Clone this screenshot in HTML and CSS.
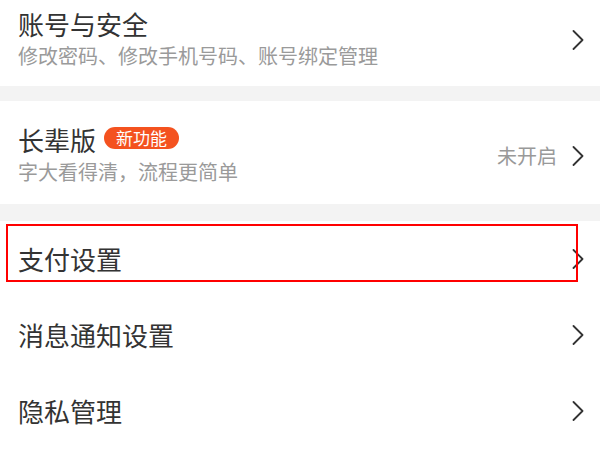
FILE: index.html
```html
<!DOCTYPE html>
<html lang="zh-CN">
<head>
<meta charset="utf-8">
<link rel="stylesheet" href="styles.css">
</head>
<body>
<div class="page">
  <section class="card card-first">
    <div class="card-text">
      <div class="title">账号与安全</div>
      <div class="sub">修改密码、修改手机号码、账号绑定管理</div>
    </div>
    <svg class="chev" viewBox="0 0 12 20" width="12" height="20"><path d="M1.5 1 L10.5 10 L1.5 19"/></svg>
  </section>
  <div class="sep"></div>
  <section class="card">
    <div class="card-text">
      <div class="title-row">
        <span class="title">长辈版</span>
        <span class="badge">新功能</span>
      </div>
      <div class="sub">字大看得清，流程更简单</div>
    </div>
    <span class="status">未开启</span>
    <svg class="chev" viewBox="0 0 12 20" width="12" height="20"><path d="M1.5 1 L10.5 10 L1.5 19"/></svg>
  </section>
  <div class="sep sep2"></div>
  <div class="list">
    <div class="row">
      <span class="row-title">支付设置</span>
      <svg class="chev" viewBox="0 0 12 20" width="12" height="20"><path d="M1.5 1 L10.5 10 L1.5 19"/></svg>
      <div class="highlight"></div>
    </div>
    <div class="row">
      <span class="row-title">消息通知设置</span>
      <svg class="chev" viewBox="0 0 12 20" width="12" height="20"><path d="M1.5 1 L10.5 10 L1.5 19"/></svg>
    </div>
    <div class="row">
      <span class="row-title">隐私管理</span>
      <svg class="chev" viewBox="0 0 12 20" width="12" height="20"><path d="M1.5 1 L10.5 10 L1.5 19"/></svg>
    </div>
  </div>
</div>
</body>
</html>
```

FILE: styles.css
```css
html, body {
  margin: 0;
  padding: 0;
  background: #ffffff;
}
body {
  width: 600px;
  height: 450px;
  overflow: hidden;
  font-family: "Noto Sans CJK SC", "Noto Sans", sans-serif;
  color: #333333;
}
.page {
  display: flex;
  flex-direction: column;
}
.card {
  display: flex;
  align-items: center;
  padding: 24px 16px 18px 18px;
  background: #ffffff;
}
.card-first {
  margin-top: -15px;
  padding-bottom: 16px;
}
.card-text {
  flex: 1;
  display: flex;
  flex-direction: column;
}
.title {
  font-size: 26px;
  line-height: 30px;
  color: #333333;
}
.title-row {
  display: flex;
  align-items: center;
}
.badge {
  margin-left: 8px;
  margin-bottom: 4px;
  height: 22px;
  line-height: 22px;
  padding: 0 12px;
  border-radius: 11px;
  background: #f4521f;
  color: #ffffff;
  font-size: 17px;
}
.sub {
  margin-top: 3px;
  font-size: 20px;
  line-height: 28px;
  color: #9a9a9a;
}
.status {
  font-size: 20px;
  line-height: 28px;
  color: #999999;
  margin-right: 15px;
}
.chev {
  display: block;
  flex: none;
}
.chev path {
  fill: none;
  stroke: #333333;
  stroke-width: 1.8;
  stroke-linecap: round;
  stroke-linejoin: round;
}
.sep {
  height: 15px;
  background: #f3f3f3;
}
.sep2 {
  height: 17px;
}
.list {
  display: flex;
  flex-direction: column;
}
.row {
  position: relative;
  height: 76px;
  display: flex;
  align-items: center;
  padding: 0 16px 0 18px;
}
.row-title {
  flex: 1;
  font-size: 26px;
  line-height: 30px;
  color: #333333;
}
.highlight {
  position: absolute;
  left: 6px;
  top: 3px;
  width: 572px;
  height: 58px;
  box-sizing: border-box;
  border: 2px solid #ff0000;
}
```
